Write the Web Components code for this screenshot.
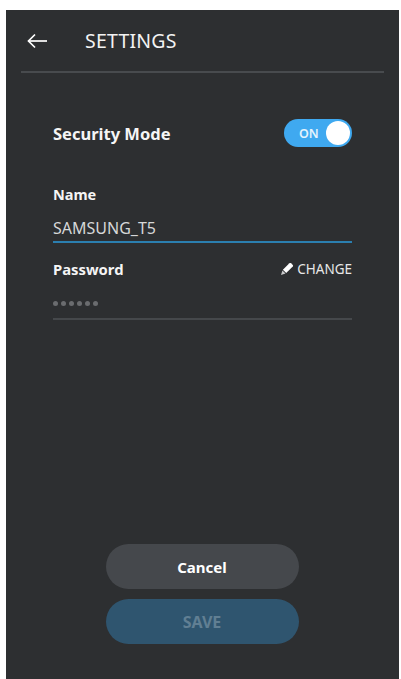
<!DOCTYPE html>
<html>
<head>
<meta charset="utf-8">
<style>
  html, body { height: 100%; }
  body {
    margin: 0;
    padding: 10px 2px 0 6px;
    box-sizing: border-box;
    background: #ffffff;
    font-family: "Noto Sans", "Open Sans", sans-serif;
    overflow: hidden;
  }
</style>
</head>
<body>
<settings-screen>
  <app-header slot="head" title="SETTINGS"></app-header>
  <toggle-row label="Security Mode"></toggle-row>
  <name-field label="Name" value="SAMSUNG_T5"></name-field>
  <password-field label="Password" action="CHANGE"></password-field>
  <pill-button slot="actions">Cancel</pill-button>
  <pill-button slot="actions" kind="save">SAVE</pill-button>
</settings-screen>

<script>
class SettingsScreen extends HTMLElement {
  constructor() {
    super();
    this.attachShadow({ mode: "open" }).innerHTML = `
      <style>
        :host {
          display: flex;
          flex-direction: column;
          height: 669px;
          background: #2d2f31;
          color: #ffffff;
        }
        .form {
          display: flex;
          flex-direction: column;
          padding: 0 47px;
        }
        .actions {
          margin-top: auto;
          padding-bottom: 35px;
          display: flex;
          flex-direction: column;
          align-items: center;
          gap: 10px;
          margin-left: -1px;
        }
      </style>
      <slot name="head"></slot>
      <div class="form"><slot></slot></div>
      <div class="actions"><slot name="actions"></slot></div>
    `;
  }
}

class AppHeader extends HTMLElement {
  constructor() {
    super();
    this.attachShadow({ mode: "open" }).innerHTML = `
      <style>
        :host {
          display: flex;
          align-items: center;
          height: 61px;
          margin: 0 15px;
          border-bottom: 2px solid #484b4e;
          box-sizing: content-box;
        }
        svg { margin-left: 6px; width: 20px; height: 16px; flex: none; }
        span {
          margin-left: 38px;
          font-size: 19.5px;
          color: #f3f3f3;
          letter-spacing: 0.2px;
        }
      </style>
      <svg viewBox="0 0 20 16" fill="none" stroke="#ffffff" stroke-width="1.7">
        <path d="M20 8H1.5"/>
        <path d="M8 1.5 1.5 8 8 14.5"/>
      </svg>
      <span></span>
    `;
    this.shadowRoot.querySelector("span").textContent = this.getAttribute("title");
  }
}

class ToggleRow extends HTMLElement {
  constructor() {
    super();
    this.attachShadow({ mode: "open" }).innerHTML = `
      <style>
        :host {
          display: flex;
          align-items: center;
          justify-content: space-between;
          margin-top: 46px;
          height: 28px;
        }
        .label { font-size: 16.5px; font-weight: 700; color: #f5f5f5; }
        .track {
          width: 68px;
          height: 28px;
          border-radius: 14px;
          background: #3fa9f0;
          display: flex;
          align-items: center;
          justify-content: space-between;
          padding: 0 2px 0 15px;
          box-sizing: border-box;
          font-size: 12.5px;
          font-weight: 600;
          color: #e4f3fd;
        }
        .knob { width: 24px; height: 24px; border-radius: 50%; background: #ffffff; }
      </style>
      <span class="label"></span>
      <div class="track"><span>ON</span><div class="knob"></div></div>
    `;
    this.shadowRoot.querySelector(".label").textContent = this.getAttribute("label");
  }
}

class NameField extends HTMLElement {
  constructor() {
    super();
    this.attachShadow({ mode: "open" }).innerHTML = `
      <style>
        :host { display: block; margin-top: 37px; }
        .label { font-size: 14.5px; font-weight: 700; line-height: 20px; color: #f5f5f5; }
        .value {
          margin-top: 13px;
          font-size: 16px;
          line-height: 22px;
          padding-bottom: 2px;
          color: #d6d7d8;
          border-bottom: 2px solid #2b7fb0;
        }
      </style>
      <div class="label"></div>
      <div class="value"></div>
    `;
    this.shadowRoot.querySelector(".label").textContent = this.getAttribute("label");
    this.shadowRoot.querySelector(".value").textContent = this.getAttribute("value");
  }
}

class PasswordField extends HTMLElement {
  constructor() {
    super();
    this.attachShadow({ mode: "open" }).innerHTML = `
      <style>
        :host { display: block; margin-top: 16px; }
        .top { display: flex; align-items: center; justify-content: space-between; height: 20px; }
        .label { font-size: 14.8px; font-weight: 700; color: #f5f5f5; }
        .action {
          display: flex;
          align-items: center;
          gap: 3px;
          font-size: 13.5px;
          color: #e8e8e8;
        }
        svg { width: 14px; height: 14px; }
        .dots {
          display: flex;
          gap: 3px;
          margin-top: 22px;
          padding-bottom: 12px;
          border-bottom: 2px solid #45484b;
        }
        .dots i { width: 5px; height: 5px; border-radius: 50%; background: #6a6c6f; }
      </style>
      <div class="top">
        <span class="label"></span>
        <span class="action">
          <svg viewBox="0 0 14 14">
            <path fill="#ffffff" d="M9.4 1.2c.5-.4 1.1-.4 1.6 0l1.8 1.8c.4.5.4 1.1 0 1.6L6.2 11 2.9 7.7z"/>
            <path fill="#c9cacb" d="M2.4 8.4 5.5 11.5 1 13z"/>
          </svg>
          <span class="text"></span>
        </span>
      </div>
      <div class="dots"><i></i><i></i><i></i><i></i><i></i><i></i></div>
    `;
    this.shadowRoot.querySelector(".label").textContent = this.getAttribute("label");
    this.shadowRoot.querySelector(".text").textContent = this.getAttribute("action");
  }
}

class PillButton extends HTMLElement {
  constructor() {
    super();
    this.attachShadow({ mode: "open" }).innerHTML = `
      <style>
        :host {
          display: flex;
          align-items: center;
          justify-content: center;
          width: 193px;
          height: 45px;
          border-radius: 23px;
          background: #45484c;
          color: #ffffff;
          font-size: 15px;
          font-weight: 700;
        }
        :host([kind="save"]) { background: #2f556f; color: #617f93; font-size: 16px; }
      </style>
      <slot></slot>
    `;
  }
}

customElements.define("settings-screen", SettingsScreen);
customElements.define("app-header", AppHeader);
customElements.define("toggle-row", ToggleRow);
customElements.define("name-field", NameField);
customElements.define("password-field", PasswordField);
customElements.define("pill-button", PillButton);
</script>
</body>
</html>
